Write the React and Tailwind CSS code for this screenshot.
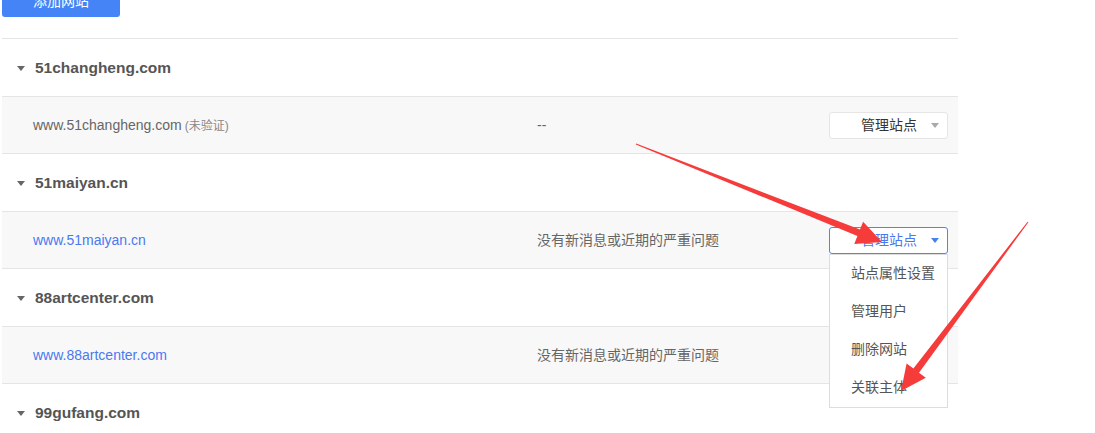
import React from 'react'

const font = { fontFamily: "'Liberation Sans', 'Noto Sans CJK SC', sans-serif" }

const sites = [
  { group: '51changheng.com', url: 'www.51changheng.com', verified: false, msg: '--' },
  { group: '51maiyan.cn', url: 'www.51maiyan.cn', verified: true, msg: '没有新消息或近期的严重问题', open: true },
  { group: '88artcenter.com', url: 'www.88artcenter.com', verified: true, msg: '没有新消息或近期的严重问题' },
  { group: '99gufang.com' },
]

const Caret = ({ className }) => (
  <svg width="8" height="5" viewBox="0 0 8 5" className={className}>
    <path d="M0 0h8L4 5z" fill="currentColor" />
  </svg>
)

const Group = ({ site }) => (
  <div>
    <div className="h-[57px] flex items-center pl-[15px] pt-[1px]">
      <Caret className="text-[#666] mr-[10px]" />
      <span className="text-[15.5px] font-bold text-[#555]">{site.group}</span>
    </div>
    {site.url && (
      <div className="h-[58px] bg-[#f8f8f8] border-y border-[#e5e5e5] flex items-center pl-[31px] pr-[10px]">
        <div className="w-[504px] text-[14px]">
          {site.verified ? (
            <span className="text-[#4a78f0]">{site.url}</span>
          ) : (
            <>
              <span className="text-[#666]">{site.url}</span>
              <span className="text-[12px] text-[#888] ml-[3px]">(未验证)</span>
            </>
          )}
        </div>
        <div className="flex-1 text-[14px] text-[#666]">{site.msg}</div>
        <div className="relative">
          <div
            className={
              'w-[119px] h-[27px] bg-white rounded-[3px] border flex items-center pl-[31px] pr-[8px] text-[14px] ' +
              (site.open ? 'border-[#4a86f5] text-[#4a78f0]' : 'border-[#e5e5e5] text-[#333]')
            }
          >
            <span>管理站点</span>
            <Caret className={'ml-auto ' + (site.open ? 'text-[#4a7ff0]' : 'text-[#aaa]')} />
          </div>
          {site.open && (
            <div className="absolute left-0 top-[27px] w-[119px] bg-white border border-[#ddd] z-10 text-[14px] text-[#555]">
              {['站点属性设置', '管理用户', '删除网站', '关联主体'].map((item) => (
                <div key={item} className="h-[38px] flex items-center pl-[21px]">
                  {item}
                </div>
              ))}
            </div>
          )}
        </div>
      </div>
    )}
  </div>
)

export default function App() {
  return (
    <div className="relative w-[1095px] h-[433px] overflow-hidden bg-white" style={font}>
      <div className="w-[956px] ml-[2px]">
        <div className="h-[38px] flex items-start">
          <button className="-mt-[15px] w-[118px] h-[32px] bg-[#4584f6] text-white text-[14px] rounded-[3px]">
            添加网站
          </button>
        </div>
        <div className="border-t border-[#e5e5e5]">
          {sites.map((s) => (
            <Group key={s.group} site={s} />
          ))}
        </div>
      </div>
      <svg className="absolute inset-0 pointer-events-none z-20" width="1095" height="433">
        <polygon
          fill="#f63b3b"
          points="636.2,143.5 860,229.6 863.1,221.7 882,242 854.3,243.9 857.4,236 635.8,144.5"
        />
        <polygon
          fill="#f63b3b"
          points="1027.6,221.7 913.4,368.5 906.6,363.4 901,391 925.8,377.8 919,372.7 1028.4,222.3"
        />
      </svg>
    </div>
  )
}
